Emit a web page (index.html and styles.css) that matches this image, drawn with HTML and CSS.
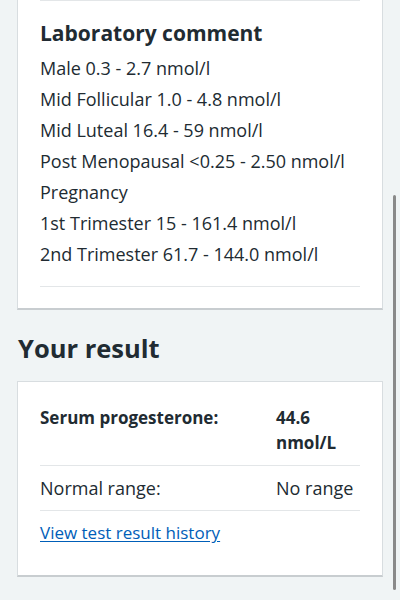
FILE: index.html
```html
<!DOCTYPE html>
<html lang="en">
<head>
<meta charset="utf-8">
<title>Test result</title>
<link rel="stylesheet" href="styles.css">
</head>
<body>
<main class="page">
  <section class="card card-top">
    <hr class="rule rule-top">
    <h2 class="card-heading">Laboratory comment</h2>
    <ul class="comment">
      <li>Male 0.3 - 2.7 nmol/l</li>
      <li>Mid Follicular 1.0 - 4.8 nmol/l</li>
      <li>Mid Luteal 16.4 - 59 nmol/l</li>
      <li>Post Menopausal &lt;0.25 - 2.50 nmol/l</li>
      <li>Pregnancy</li>
      <li>1st Trimester 15 - 161.4 nmol/l</li>
      <li>2nd Trimester 61.7 - 144.0 nmol/l</li>
    </ul>
    <hr class="rule">
  </section>

  <h1 class="section-heading">Your result</h1>

  <section class="card card-result">
    <dl class="summary">
      <div class="row">
        <dt class="key strong">Serum progesterone:</dt>
        <dd class="value strong">44.6 nmol/L</dd>
      </div>
      <div class="row">
        <dt class="key">Normal range:</dt>
        <dd class="value">No range</dd>
      </div>
    </dl>
    <a class="link" href="#">View test result history</a>
  </section>
</main>
<div class="scrollbar"></div>
</body>
</html>
```

FILE: styles.css
```css
html, body {
  margin: 0;
  padding: 0;
  background: #f0f4f5;
}
body {
  font-family: "Open Sans", "Noto Sans", "Liberation Sans", sans-serif;
  color: #212b32;
  height: 600px;
  overflow: hidden;
}
.page {
  padding: 0 17px;
}
.card {
  background: #ffffff;
  border: 1px solid #d8dde0;
  border-bottom: 2px solid #c8cdd0;
  padding: 0 22px;
}
.card-top {
  border-top: none;
  padding-bottom: 21px;
}
.rule {
  border: 0;
  border-top: 1px solid #e3e6e8;
  margin: 0;
}
.rule-top {
  margin-bottom: 18px;
}
.card-heading {
  font-size: 21px;
  line-height: 28px;
  font-weight: 700;
  margin: 0 0 6px;
}
.comment {
  list-style: none;
  margin: 0 0 16px;
  padding: 0;
  font-size: 18px;
  line-height: 31px;
}
.section-heading {
  font-size: 25.5px;
  line-height: 34px;
  font-weight: 700;
  margin: 21px 1px 16px;
}
.card-result {
  padding-top: 12px;
  padding-bottom: 30px;
}
.summary {
  margin: 0;
}
.row {
  display: grid;
  grid-template-columns: 236px 1fr;
  padding: 11px 0 10px;
  border-bottom: 1px solid #e3e6e8;
  font-size: 18px;
  line-height: 25px;
}
.row + .row {
  padding: 10px 0 9px;
}
.key, .value {
  margin: 0;
}
.strong {
  font-weight: 700;
  font-size: 17px;
}
.link {
  display: inline-block;
  margin-top: 9px;
  font-size: 17px;
  line-height: 25px;
  color: #005eb8;
  text-decoration: underline;
  text-underline-offset: 2px;
}
.scrollbar {
  position: fixed;
  right: 4px;
  top: 195px;
  width: 3px;
  height: 395px;
  border-radius: 2px;
  background: #8a8a8a;
}
```
